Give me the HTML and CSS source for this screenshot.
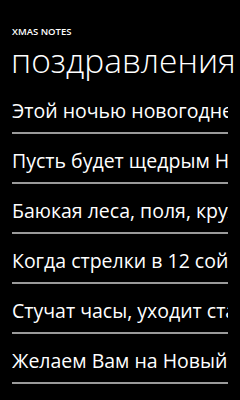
FILE: index.html
```html
<!DOCTYPE html>
<html lang="ru">
<head>
  <meta charset="UTF-8">
  <meta name="viewport" content="width=device-width, initial-scale=1.0">
  <title>Xmas Notes</title>
  <link rel="stylesheet" href="styles.css">
</head>
<body>
  <div id="header">
    <div id="app-title">XMAS NOTES</div>
    <div id="page-title">поздравления</div>
  </div>

  <ul id="notes-list">
    <li class="note-item"><span class="note-text">Этой ночью новогодней</span></li>
    <li class="note-item"><span class="note-text">Пусть будет щедрым Новый год</span></li>
    <li class="note-item"><span class="note-text">Баюкая леса, поля, кружит метель</span></li>
    <li class="note-item"><span class="note-text">Когда стрелки в 12 сойдутся</span></li>
    <li class="note-item"><span class="note-text">Стучат часы, уходит старый год</span></li>
    <li class="note-item"><span class="note-text">Желаем Вам на Новый год</span></li>
  </ul>
</body>
</html>
```

FILE: styles.css
```css
body {
  margin: 0;
  padding: 0;
  background-color: #000;
  color: #fff;
  font-family: "Open Sans", "Noto Sans", sans-serif;
  overflow: hidden;
}

#header {
  padding: 26px 0 0 12px;
  white-space: nowrap;
  overflow: hidden;
}

#app-title {
  font-size: 9.5px;
  font-weight: 600;
  line-height: 12px;
}

#page-title {
  font-size: 33.5px;
  font-weight: 350;
  line-height: 40px;
  margin-top: 2px;
  margin-bottom: 4px;
  margin-left: -1px;
}

#notes-list {
  list-style: none;
  margin: 0 0 0 12px;
  padding: 0;
  width: 216px;
}

.note-item {
  height: 48px;
  border-bottom: 2px solid #9a9a9a;
  display: flex;
  align-items: flex-end;
  overflow: hidden;
}

.note-text {
  display: block;
  font-size: 19.5px;
  line-height: 24px;
  padding-bottom: 9px;
  white-space: nowrap;
  overflow: hidden;
}
```
